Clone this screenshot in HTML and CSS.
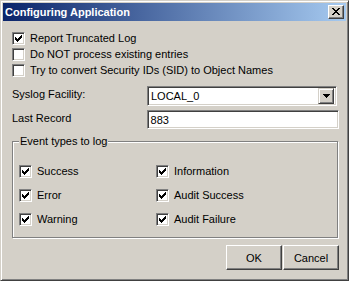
FILE: index.html
```html
<html>
    <head>
        <title>Configuring Application</title>
        <link rel="stylesheet" href="styles.css">
    </head>
    <body>
        <div class="window">
            <div class="titlebar">
                <span class="title">Configuring Application</span>
                <span class="closebtn">
                    <svg width="8" height="7" viewBox="0 0 8 7" shape-rendering="crispEdges"><path d="M0 0h2v1H0zM6 0h2v1H6zM1 1h2v1H1zM5 1h2v1H5zM2 2h4v1H2zM3 3h2v1H3zM2 4h4v1H2zM1 5h2v1H1zM5 5h2v1H5zM0 6h2v1H0zM6 6h2v1H6z" fill="#000"/></svg>
                </span>
            </div>

            <div class="content">
                <div class="checks">
                    <div class="check-row"><span class="checkbox checked"><svg width="9" height="9" viewBox="0 0 9 9" shape-rendering="crispEdges"><path d="M1 3h1v3H1zM2 4h1v3H2zM3 5h1v3H3zM4 4h1v3H4zM5 3h1v3H5zM6 2h1v3H6zM7 1h1v3H7z" fill="#000"/></svg></span>Report Truncated Log</div>
                    <div class="check-row"><span class="checkbox"></span>Do NOT process existing entries</div>
                    <div class="check-row"><span class="checkbox"></span>Try to convert Security IDs (SID) to Object Names</div>
                </div>

                <div class="field-row">
                    <span class="label">Syslog Facility:</span>
                    <div class="combo">
                        <span class="combo-text">LOCAL_0</span>
                        <span class="dropbtn"><svg width="7" height="4" viewBox="0 0 7 4" shape-rendering="crispEdges"><path d="M0 0h7v1H0zM1 1h5v1H1zM2 2h3v1H2zM3 3h1v1H3z" fill="#000"/></svg></span>
                    </div>
                </div>
                <div class="field-row">
                    <span class="label">Last Record</span>
                    <div class="edit">883</div>
                </div>

                <fieldset class="group">
                    <legend>Event types to log</legend>
                    <div class="group-grid">
                        <div class="check-row"><span class="checkbox checked"><svg width="9" height="9" viewBox="0 0 9 9" shape-rendering="crispEdges"><path d="M1 3h1v3H1zM2 4h1v3H2zM3 5h1v3H3zM4 4h1v3H4zM5 3h1v3H5zM6 2h1v3H6zM7 1h1v3H7z" fill="#000"/></svg></span>Success</div>
                        <div class="check-row"><span class="checkbox checked"><svg width="9" height="9" viewBox="0 0 9 9" shape-rendering="crispEdges"><path d="M1 3h1v3H1zM2 4h1v3H2zM3 5h1v3H3zM4 4h1v3H4zM5 3h1v3H5zM6 2h1v3H6zM7 1h1v3H7z" fill="#000"/></svg></span>Information</div>
                        <div class="check-row"><span class="checkbox checked"><svg width="9" height="9" viewBox="0 0 9 9" shape-rendering="crispEdges"><path d="M1 3h1v3H1zM2 4h1v3H2zM3 5h1v3H3zM4 4h1v3H4zM5 3h1v3H5zM6 2h1v3H6zM7 1h1v3H7z" fill="#000"/></svg></span>Error</div>
                        <div class="check-row"><span class="checkbox checked"><svg width="9" height="9" viewBox="0 0 9 9" shape-rendering="crispEdges"><path d="M1 3h1v3H1zM2 4h1v3H2zM3 5h1v3H3zM4 4h1v3H4zM5 3h1v3H5zM6 2h1v3H6zM7 1h1v3H7z" fill="#000"/></svg></span>Audit Success</div>
                        <div class="check-row"><span class="checkbox checked"><svg width="9" height="9" viewBox="0 0 9 9" shape-rendering="crispEdges"><path d="M1 3h1v3H1zM2 4h1v3H2zM3 5h1v3H3zM4 4h1v3H4zM5 3h1v3H5zM6 2h1v3H6zM7 1h1v3H7z" fill="#000"/></svg></span>Warning</div>
                        <div class="check-row"><span class="checkbox checked"><svg width="9" height="9" viewBox="0 0 9 9" shape-rendering="crispEdges"><path d="M1 3h1v3H1zM2 4h1v3H2zM3 5h1v3H3zM4 4h1v3H4zM5 3h1v3H5zM6 2h1v3H6zM7 1h1v3H7z" fill="#000"/></svg></span>Audit Failure</div>
                    </div>
                </fieldset>

                <div class="buttons">
                    <span class="button">OK</span>
                    <span class="button">Cancel</span>
                </div>
            </div>
        </div>
    </body>
</html>
```

FILE: styles.css
```css
body {
    margin: 0;
    font-family: "Liberation Sans", Arial, sans-serif;
    font-size: 11px;
    color: #000;
    background-color: #d4d0c8;
}

/* Outer window frame, classic 3D look */
.window {
    width: 349px;
    height: 281px;
    box-sizing: border-box;
    padding: 2px;
    border: 1px solid;
    border-color: #d4d0c8 #404040 #404040 #d4d0c8;
    box-shadow: inset 1px 1px #fff, inset -1px -1px #808080;
    background-color: #d4d0c8;
    display: flex;
    flex-direction: column;
}

.titlebar {
    height: 18px;
    display: flex;
    align-items: center;
    justify-content: space-between;
    padding-left: 2px;
    padding-right: 2px;
    background: linear-gradient(to right, #0a246a, #a6caf0);
}

.title {
    color: #fff;
    font-weight: bold;
    font-size: 11px;
}

.closebtn {
    width: 16px;
    height: 14px;
    box-sizing: border-box;
    border: 1px solid;
    border-color: #fff #404040 #404040 #fff;
    box-shadow: inset -1px -1px #808080;
    background-color: #d4d0c8;
    display: flex;
    align-items: center;
    justify-content: center;
    padding: 0 1px 1px 0;
}

.closebtn svg {
    display: block;
}

.content {
    flex: 1;
    padding: 11px 7px 0 9px;
    display: flex;
    flex-direction: column;
}

.check-row {
    display: flex;
    align-items: center;
    height: 13px;
    line-height: 13px;
    gap: 5px;
    white-space: nowrap;
}

.checks .check-row {
    margin-bottom: 3px;
}

/* Sunken checkbox */
.checkbox {
    width: 13px;
    height: 13px;
    box-sizing: border-box;
    border: 1px solid;
    border-color: #808080 #fff #fff #808080;
    box-shadow: inset 1px 1px #404040, inset -1px -1px #d4d0c8;
    background-color: #fff;
    padding: 1px;
    flex: none;
}

.checkbox svg {
    display: block;
}

.field-row {
    display: flex;
    align-items: flex-start;
}

.field-row .label {
    width: 135px;
    padding-top: 2px;
    line-height: 13px;
}

.field-row:nth-of-type(2) {
    margin-top: 6px;
}

.field-row + .field-row {
    margin-top: 4px;
}

.combo {
    width: 190px;
    height: 20px;
    box-sizing: border-box;
    border: 1px solid;
    border-color: #808080 #fff #fff #808080;
    box-shadow: inset 1px 1px #404040, inset -1px -1px #d4d0c8;
    background-color: #fff;
    padding: 2px;
    display: flex;
    align-items: center;
    justify-content: space-between;
}

.combo-text {
    padding-left: 1px;
}

.dropbtn {
    width: 16px;
    height: 16px;
    box-sizing: border-box;
    border: 1px solid;
    border-color: #d4d0c8 #404040 #404040 #d4d0c8;
    box-shadow: inset 1px 1px #fff, inset -1px -1px #808080;
    background-color: #d4d0c8;
    display: flex;
    align-items: center;
    justify-content: center;
}

.edit {
    width: 193px;
    height: 19px;
    box-sizing: border-box;
    border: 1px solid;
    border-color: #808080 #fff #fff #808080;
    box-shadow: inset 1px 1px #404040, inset -1px -1px #d4d0c8;
    background-color: #fff;
    padding: 2px 3px;
    line-height: 14px;
}

/* Etched group box */
.group {
    margin: 6px 1px 0 0;
    padding: 17px 6px 11px 6px;
    border: 1px solid #808080;
    box-shadow: inset 1px 1px #fff, 1px 1px #fff;
    min-width: 0;
}

.group legend {
    padding: 0 1px;
    line-height: 13px;
    background-color: #d4d0c8;
}

.group-grid {
    display: grid;
    grid-template-columns: 137px auto;
    row-gap: 11px;
}

.buttons {
    display: flex;
    justify-content: flex-end;
    margin-top: 7px;
}

.button {
    width: 56px;
    height: 25px;
    box-sizing: border-box;
    border: 1px solid;
    border-color: #fff #404040 #404040 #fff;
    box-shadow: inset -1px -1px #808080;
    display: flex;
    align-items: center;
    justify-content: center;
}

.button + .button {
    margin-left: 1px;
}
```
